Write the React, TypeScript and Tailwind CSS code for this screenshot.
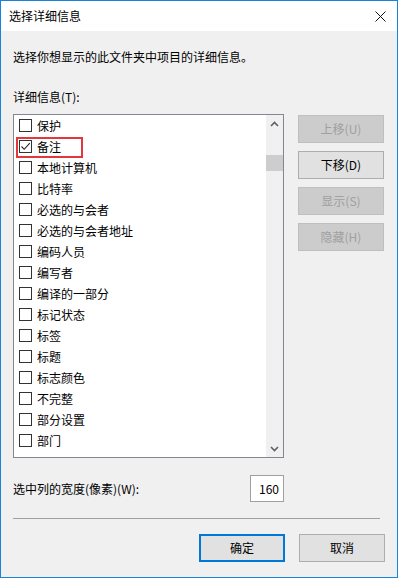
import React from 'react';

const items = [
  '保护',
  '备注',
  '本地计算机',
  '比特率',
  '必选的与会者',
  '必选的与会者地址',
  '编码人员',
  '编写者',
  '编译的一部分',
  '标记状态',
  '标签',
  '标题',
  '标志颜色',
  '不完整',
  '部分设置',
  '部门',
];

const font = { fontFamily: '"Microsoft YaHei UI", "Noto Sans CJK SC", "Noto Sans", sans-serif' };

function SideButton({ label, enabled }: { label: string; enabled?: boolean }) {
  return (
    <div
      className={
        enabled
          ? 'flex h-[28px] w-[86px] items-center justify-center border border-[#adadad] bg-[#e1e1e1] text-[12px] text-black'
          : 'flex h-[28px] w-[86px] items-center justify-center border border-[#bfbfbf] bg-[#cccccc] text-[12px] text-[#a0a0a0]'
      }
    >
      {label}
    </div>
  );
}

export default function App() {
  return (
    <div
      className="flex h-[578px] w-[398px] flex-col border border-[#1883d7] bg-[#f0f0f0] text-[12px] leading-[16px] text-black"
      style={font}
    >
      {/* Title bar */}
      <div className="flex h-[30px] shrink-0 items-center justify-between bg-white pl-[8px] pr-[10px]">
        <span>选择详细信息</span>
        <svg width="11" height="11" viewBox="0 0 11 11" className="mr-[1px]">
          <path d="M0.5 0.5 L10.5 10.5 M10.5 0.5 L0.5 10.5" stroke="#111" strokeWidth="1" />
        </svg>
      </div>

      {/* Body */}
      <div className="flex flex-1 flex-col px-[12px]">
        <p className="mt-[18px]">选择你想显示的此文件夹中项目的详细信息。</p>
        <p className="mt-[24px]">详细信息(T):</p>

        <div className="mt-[9px] flex gap-[14px]">
          {/* List */}
          <div className="relative flex h-[344px] w-[271px] border border-[#828790] bg-white">
            <div className="flex-1 overflow-hidden">
              {items.map((item, i) => (
                <div key={item} className="relative flex h-[21px] items-center pl-[5px]">
                  <div className="flex h-[13px] w-[13px] items-center justify-center border border-[#333] bg-white">
                    {i === 1 && (
                      <svg width="11" height="11" viewBox="0 0 11 11">
                        <path d="M1.5 5.5 L4.2 8.3 L9.8 2.2" fill="none" stroke="#222" strokeWidth="1.1" />
                      </svg>
                    )}
                  </div>
                  <span className="ml-[5px]">{item}</span>
                  {i === 1 && (
                    <div className="absolute left-[2px] top-[1px] h-[21px] w-[67px] border-2 border-[#e0383c]" />
                  )}
                </div>
              ))}
            </div>
            {/* Scrollbar */}
            <div className="flex w-[17px] flex-col bg-[#f0f0f0]">
              <div className="flex h-[17px] items-center justify-center">
                <svg width="9" height="6" viewBox="0 0 9 6">
                  <path d="M1 5 L4.5 1.5 L8 5" fill="none" stroke="#606060" strokeWidth="1.6" />
                </svg>
              </div>
              <div className="mt-[23px] h-[16px] w-full bg-[#cdcdcd]" />
              <div className="flex-1" />
              <div className="flex h-[17px] items-center justify-center">
                <svg width="9" height="6" viewBox="0 0 9 6">
                  <path d="M1 1 L4.5 4.5 L8 1" fill="none" stroke="#606060" strokeWidth="1.6" />
                </svg>
              </div>
            </div>
          </div>

          {/* Buttons */}
          <div className="flex flex-col gap-[8px] pt-[1px]">
            <SideButton label="上移(U)" />
            <SideButton label="下移(D)" enabled />
            <SideButton label="显示(S)" />
            <SideButton label="隐藏(H)" />
          </div>
        </div>

        {/* Width */}
        <div className="mt-[17px] flex w-[271px] items-center justify-between">
          <span>选中列的宽度(像素)(W):</span>
          <div className="flex h-[27px] w-[34px] items-center justify-end border border-[#a0a0a0] bg-white pr-[4px]">
            160
          </div>
        </div>

        <div className="mt-[16px] h-px w-[367px] bg-[#a0a0a0]" />

        <div className="mt-[15px] flex justify-end gap-[14px]">
          <div className="flex h-[28px] w-[86px] items-center justify-center border-2 border-[#0078d7] bg-[#e1e1e1]">
            确定
          </div>
          <div className="flex h-[28px] w-[86px] items-center justify-center border border-[#adadad] bg-[#e1e1e1]">
            取消
          </div>
        </div>
      </div>
    </div>
  );
}
